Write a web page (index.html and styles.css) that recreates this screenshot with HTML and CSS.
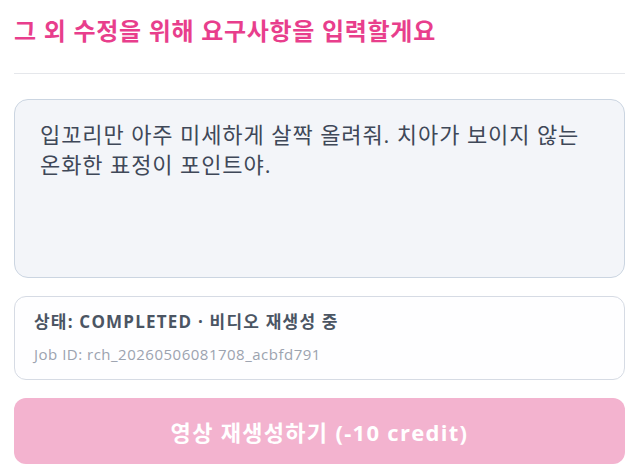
FILE: index.html
```html
<!DOCTYPE html>
<html lang="ko">
<head>
<meta charset="utf-8">
<title>요구사항 입력</title>
<link rel="stylesheet" href="styles.css">
</head>
<body>
<main class="panel">
  <header class="panel-head">
    <h2 class="title">그 외 수정을 위해 요구사항을 입력할게요</h2>
  </header>
  <textarea class="request" rows="4">입꼬리만 아주 미세하게 살짝 올려줘. 치아가 보이지 않는 온화한 표정이 포인트야.</textarea>
  <section class="status-card">
    <p class="status-line">상태: COMPLETED · 비디오 재생성 중</p>
    <p class="job-line">Job ID: rch_20260506081708_acbfd791</p>
  </section>
  <button class="submit" type="button" disabled>영상 재생성하기 (-10 credit)</button>
</main>
</body>
</html>
```
FILE: styles.css
```css
* { box-sizing: border-box; }
html, body {
  margin: 0;
  padding: 0;
  background: #ffffff;
}
body {
  font-family: "Open Sans", "Noto Sans CJK KR", sans-serif;
}
.panel {
  width: 611px;
  margin-left: 14px;
  display: flex;
  flex-direction: column;
}
.panel-head {
  padding-top: 14px;
  padding-bottom: 25px;
  border-bottom: 1px solid #e5e7eb;
}
.title {
  margin: 0;
  font-size: 24px;
  line-height: 34px;
  font-weight: 700;
  letter-spacing: 0.7px;
  color: #e83e8c;
  font-family: "Open Sans", "Noto Sans CJK KR", sans-serif;
}
.request {
  display: block;
  margin-top: 25px;
  width: 100%;
  height: 179px;
  padding: 19px 25px;
  border: 1px solid #cbd5e1;
  border-radius: 14px;
  background: #f3f5f9;
  color: #3f4858;
  font-family: "Open Sans", "Noto Sans CJK KR", sans-serif;
  font-size: 22px;
  line-height: 30px;
  letter-spacing: 0.9px;
  word-break: keep-all;
  resize: none;
  outline: none;
  overflow: hidden;
}
.status-card {
  margin-top: 18px;
  height: 84px;
  padding: 12px 19px 13px;
  border: 1px solid #d6dbe4;
  border-radius: 12px;
  background: #fefeff;
  display: flex;
  flex-direction: column;
  gap: 9px;
}
.status-line {
  margin: 0;
  font-size: 17px;
  line-height: 25px;
  font-weight: 700;
  letter-spacing: 1.2px;
  color: #4b5563;
}
.job-line {
  margin: 0;
  font-size: 15px;
  line-height: 22px;
  letter-spacing: 0.5px;
  color: #9ca3af;
}
.submit {
  margin-top: 18px;
  height: 66px;
  width: 100%;
  border: none;
  border-radius: 12px;
  background: #f3b3cf;
  color: #ffffff;
  font-family: "Open Sans", "Noto Sans CJK KR", sans-serif;
  font-size: 22px;
  font-weight: 700;
  letter-spacing: 1.3px;
}
```
